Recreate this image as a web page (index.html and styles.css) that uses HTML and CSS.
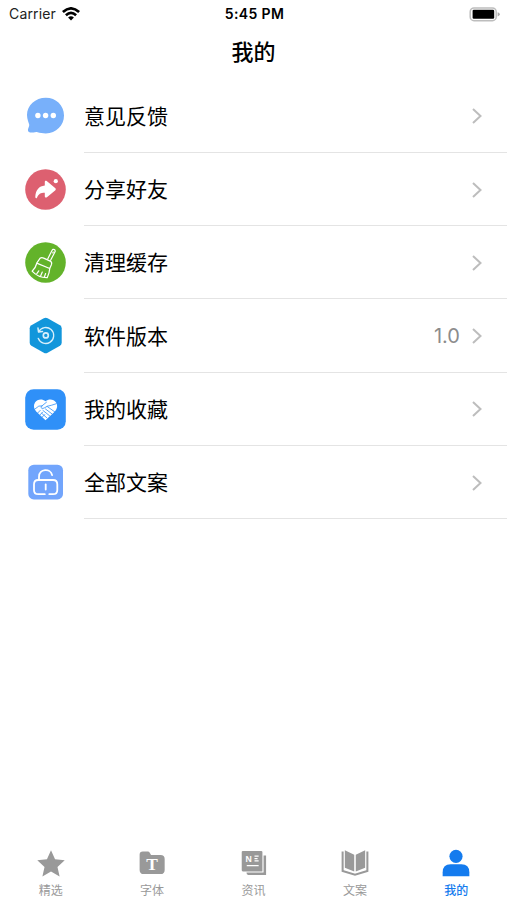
FILE: index.html
```html
<!DOCTYPE html>
<html lang="zh-CN">
<head>
  <meta charset="UTF-8" />
  <meta name="viewport" content="width=device-width, initial-scale=1.0" />
  <title>我的</title>
  <link rel="stylesheet" href="styles.css">
</head>
<body>
  <div class="app">
    <div class="status-bar">
      <div class="carrier">
        <span>Carrier</span>
        <svg width="18" height="14" viewBox="0 0 18 14">
          <g fill="none" stroke="#000" stroke-width="2.7">
            <path d="M.9 5.1Q9-2.3 17.1 5.1"/>
            <path d="M3.9 8.2Q9 3.7 14.1 8.2"/>
          </g>
          <path d="M6.1 10.4Q9 8.2 11.9 10.4L9 13.4z"/>
        </svg>
      </div>
      <div class="clock">5:45 PM</div>
      <div class="battery">
        <svg width="31" height="15" viewBox="0 0 31 15">
          <rect x="1.2" y=".9" width="26" height="12.8" rx="3.8" fill="#fff" stroke="#bdbdbd" stroke-width="1.5"/>
          <rect x="3.6" y="2.8" width="21.6" height="9" rx="1.2"/>
          <path d="M28.6 5.2q2.2.7 2.2 2.1t-2.2 2.1z" fill="#aaa"/>
        </svg>
      </div>
    </div>

    <h1 class="page-title">我的</h1>

    <div class="menu">
      <div class="menu-item">
        <svg class="menu-icon" viewBox="0 0 41 41">
          <path d="M20.8 1.8C10.5 1.8 2 9.3 2 19c0 4.4 1.8 7.9 2.2 9.4.4 1.9-1.3 3.8-1.3 5.5 0 2.3 2.4 3 5.7 2.5 1.6-.2 2.3-.8 4-.2 2.3.7 5 1.2 8.2 1.2C31.2 37.2 39 29.5 39 19.500S31.1 1.800 20.8 1.800z" fill="#78b0fa"/>
          <g fill="#fff">
            <circle cx="12.900" cy="19.500" r="2.700"/>
            <circle cx="20.600" cy="19.500" r="2.700"/>
            <circle cx="28.300" cy="19.500" r="2.700"/>
          </g>
        </svg>
        <div class="menu-body">
          <span class="menu-label">意见反馈</span>
          <svg class="arrow" viewBox="0 0 10 16"><path d="M1 1l7.500 7L1 15"/></svg>
        </div>
      </div>

      <div class="menu-item">
        <svg class="menu-icon" viewBox="0 0 41 41">
          <circle cx="20.500" cy="20.500" r="20.300" fill="#dd6070"/>
          <path d="M19.800 12.800c0-1.100 1-1.500 1.900-.8l8.400 6.900c.9.800.9 1.700 0 2.500l-8.200 6.800c-1 .8-2.100.3-2.100-.9v-3.500c-4.300 0-6.200 1.400-7.700 4.600-.7 1.400-1.900 1-1.800-.6.300-6.400 3.600-10.600 9.500-11.200z" fill="#fff"/>
          <circle cx="30.800" cy="12.200" r="2.100" fill="#fff"/>
        </svg>
        <div class="menu-body">
          <span class="menu-label">分享好友</span>
          <svg class="arrow" viewBox="0 0 10 16"><path d="M1 1l7.500 7L1 15"/></svg>
        </div>
      </div>

      <div class="menu-item">
        <svg class="menu-icon" viewBox="0 0 41 41">
          <circle cx="20.500" cy="20.500" r="20.300" fill="#63b32a"/>
          <g fill="none" stroke="#fff" stroke-width="1.200" stroke-linecap="round" stroke-linejoin="round">
            <path d="M22.700 16.900L27 8.500q.9-1.700 2.300-.9 1.400.8.600 2.400l-4.300 8.300"/>
            <path d="M28.200 10.100l-.4.800"/>
            <path d="M15 16.300q1.500-1.100 3.700-.2l6.500 3q2.100 1 1.300 3.300l-1.800 4.100-13-5.400z"/>
            <path d="M11.700 21.500c-.7 3-2.300 5.600-4.600 7.700 4.300 4.700 8.700 6.600 15.100 6.500 1.300-2.600 2.300-5.700 2.500-8.800"/>
            <path d="M13.800 28.800l-2 2.900M17.300 30.100l-1.600 3.700M20.600 31.500l-1.200 3.400"/>
          </g>
        </svg>
        <div class="menu-body">
          <span class="menu-label">清理缓存</span>
          <svg class="arrow" viewBox="0 0 10 16"><path d="M1 1l7.500 7L1 15"/></svg>
        </div>
      </div>

      <div class="menu-item">
        <svg class="menu-icon" viewBox="0 0 41 41">
          <path d="M18.800 2.200q1.900-1 3.800 0l12.400 7q1.700 1 1.700 3v14.500q0 2-1.700 3l-12.400 7q-1.900 1-3.800 0l-12.400-7q-1.700-1-1.700-3V12.200q0-2 1.700-3z" fill="#1296db"/>
          <g fill="none" stroke="#d8effb" stroke-linecap="round" stroke-linejoin="round">
            <path d="M13.700 15.600a8 8 0 1 1-.5 6.700" stroke-width="1.300"/>
            <path d="M13 12.100l.5 3.900 4-.5" stroke-width="1.500"/>
            <circle cx="20.800" cy="19.400" r="2.500" stroke-width="1.700"/>
          </g>
        </svg>
        <div class="menu-body">
          <span class="menu-label">软件版本</span>
          <span class="menu-value">1.0</span>
          <svg class="arrow" viewBox="0 0 10 16"><path d="M1 1l7.500 7L1 15"/></svg>
        </div>
      </div>

      <div class="menu-item">
        <svg class="menu-icon" viewBox="0 0 41 41">
          <rect x=".2" y=".2" width="40.600" height="40.600" rx="8.500" fill="#2f90f8"/>
          <path d="M20.500 12.300c-3.700-3.200-8.300-2-10.500 1.300-1.800 2.900-1.300 6.300 1.200 9l9.300 8.700 9.400-8.700c2.500-2.700 3-6.100 1.200-9-2.200-3.300-6.900-4.500-10.600-1.300z" fill="#fff"/>
          <g fill="none" stroke="#2f90f8" stroke-width=".8" stroke-linecap="round" stroke-linejoin="round">
            <path d="M9.600 20.300l4.200-3.200 3.400-.2"/>
            <path d="M21.500 13.200l-5.400 4.400c-.5 1.800 1.500 2.300 3 1.400l3-1.600 7.700 5.500"/>
            <path d="M22 17.300l4.300-1 5-1.600M20.500 20l6.500 4.900M17.900 21.400l6.700 5.400M16.700 24.300l5 4.400"/>
            <path d="M12.600 24.100l2.600-2.700M14.700 26.200l2.900-3M17 28.300l2.700-2.700"/>
          </g>
        </svg>
        <div class="menu-body">
          <span class="menu-label">我的收藏</span>
          <svg class="arrow" viewBox="0 0 10 16"><path d="M1 1l7.500 7L1 15"/></svg>
        </div>
      </div>

      <div class="menu-item">
        <svg class="menu-icon" viewBox="0 0 41 41">
          <rect x="3.300" y="2.700" width="34.700" height="34.700" rx="5.500" fill="#72a5fc"/>
          <g fill="none" stroke="#fff" stroke-width="1.800" stroke-linecap="round">
            <path d="M24.300 32.200H28q4.300 0 4.300-4.300v-5.600q0-4.300-4.300-4.300H13.300Q9 18 9 22.300v5.600q0 4.300 4.300 4.300h6.500"/>
            <path d="M14 17.800v-3c0-8.300 11.700-9 13.100-1.600"/>
            <path d="M20.700 22.500v5"/>
          </g>
        </svg>
        <div class="menu-body">
          <span class="menu-label">全部文案</span>
          <svg class="arrow" viewBox="0 0 10 16"><path d="M1 1l7.500 7L1 15"/></svg>
        </div>
      </div>
    </div>

    <div class="tab-bar">
      <div class="tab">
        <svg viewBox="0 0 30 30">
          <path d="M15 1.300l4.200 9.400 10 1-7.500 6.800 2.200 9.900-8.900-5.200-8.900 5.200 2.200-9.900L.8 11.700l10-1z"/>
        </svg>
        <span>精选</span>
      </div>
      <div class="tab">
        <svg viewBox="0 0 30 30">
          <path d="M5.500 2.500h5.200q1.300 0 2 1.300l1.300 2.300h9.800q4.300 0 4.300 4.200v11.300q0 4.300-4.300 4.300H6.500q-4.300 0-4.300-4.300V5.800Q2.200 2.500 5.500 2.500z"/>
          <text class="icon-t" x="15.100" y="21.800">T</text>
        </svg>
        <span>字体</span>
      </div>
      <div class="tab">
        <svg viewBox="0 0 30 30">
          <path d="M3.500 2h19q1.200 0 1.200 1.200v20H3.500q-1.200 0-1.200-1.200V3.200Q2.300 2 3.500 2z"/>
          <path d="M24.900 6.800h2.600v20H9q-1.800 0-1.800-2.400h17.700z"/>
          <text class="icon-n" x="6.300" y="13.100">N</text>
          <path class="cut" d="M15.500 7.400h4.300M15.500 12.400h4.300M15.500 9.900h3.200M7.500 17.200h12.300"/>
        </svg>
        <span>资讯</span>
      </div>
      <div class="tab">
        <svg viewBox="0 0 30 30">
          <path d="M4.500 1.200l9.700 4.800v17.200l-9.700-3.700zM25.500 1.200L15.800 6v17.200l9.700-3.700z"/>
          <path class="book-edge" d="M2.200 2.500v20.300L15 26.600l12.800-3.800V2.500"/>
        </svg>
        <span>文案</span>
      </div>
      <div class="tab active">
        <svg viewBox="0 0 30 30">
          <circle cx="15" cy="7.600" r="6.800"/>
          <path d="M1.200 28.100v-4q0-8.300 8.300-8.300h11q8.300 0 8.300 8.300v4z"/>
        </svg>
        <span>我的</span>
      </div>
    </div>
  </div>
</body>
</html>
```

FILE: styles.css
```css
* {
  box-sizing: border-box;
}

body {
  margin: 0;
  background-color: #fff;
  color: #000;
  font-family: Inter, 'Noto Sans CJK SC', sans-serif;
}

.app {
  height: 900px;
  display: flex;
  flex-direction: column;
  overflow: hidden;
}

svg {
  display: block;
}

.status-bar {
  height: 27px;
  padding: 0 7px 0 9px;
  display: grid;
  grid-template-columns: 1fr auto 1fr;
  align-items: center;
  font-size: 14px;
  line-height: 28px;
}

.carrier {
  display: flex;
  align-items: center;
  gap: 6px;
  color: #222;
  letter-spacing: 0.15px;
}

.carrier svg {
  margin-bottom: 1px;
}

.clock {
  font-weight: 600;
  letter-spacing: 0.35px;
}

.battery {
  display: flex;
  justify-content: flex-end;
}

.page-title {
  margin: 0;
  height: 52.6px;
  font-size: 22px;
  font-weight: 500;
  line-height: 50px;
  text-align: center;
}

.menu {
  flex: 1;
}

.menu-item {
  height: 73.3px;
  padding-left: 25px;
  display: flex;
  align-items: center;
  gap: 18px;
}

.menu-icon {
  width: 41px;
  height: 41px;
  flex: none;
}

.menu-body {
  flex: 1;
  height: 100%;
  padding-right: 25px;
  display: flex;
  align-items: center;
  border-bottom: 1px solid #e4e4e4;
}

.menu-label {
  flex: 1;
  padding-bottom: 2px;
  font-size: 21px;
}

.menu-value {
  margin-right: 12px;
  font-size: 20px;
  color: #8c8c8c;
}

.arrow {
  width: 10px;
  height: 16px;
  margin-top: 1px;
  fill: none;
  stroke: #bdbdbd;
  stroke-width: 2;
}

.tab-bar {
  height: 54px;
  display: flex;
}

.tab {
  flex: 1;
  padding-top: 3px;
  display: flex;
  flex-direction: column;
  align-items: center;
  gap: 4px;
  font-size: 12px;
  line-height: 18px;
  color: #999;
}

.tab svg {
  width: 30px;
  height: 30px;
  fill: currentColor;
}

.tab.active {
  color: #147bee;
  font-weight: 500;
}

.tab .icon-t {
  font: bold 18px 'Liberation Serif', serif;
  fill: #fff;
  text-anchor: middle;
}

.tab .icon-n {
  font: bold 9px 'Liberation Sans', sans-serif;
  fill: #fff;
}

.tab .cut {
  fill: none;
  stroke: #fff;
  stroke-width: 1.3;
}

.tab .book-edge {
  fill: none;
  stroke: currentColor;
  stroke-width: 2.1;
}
```
